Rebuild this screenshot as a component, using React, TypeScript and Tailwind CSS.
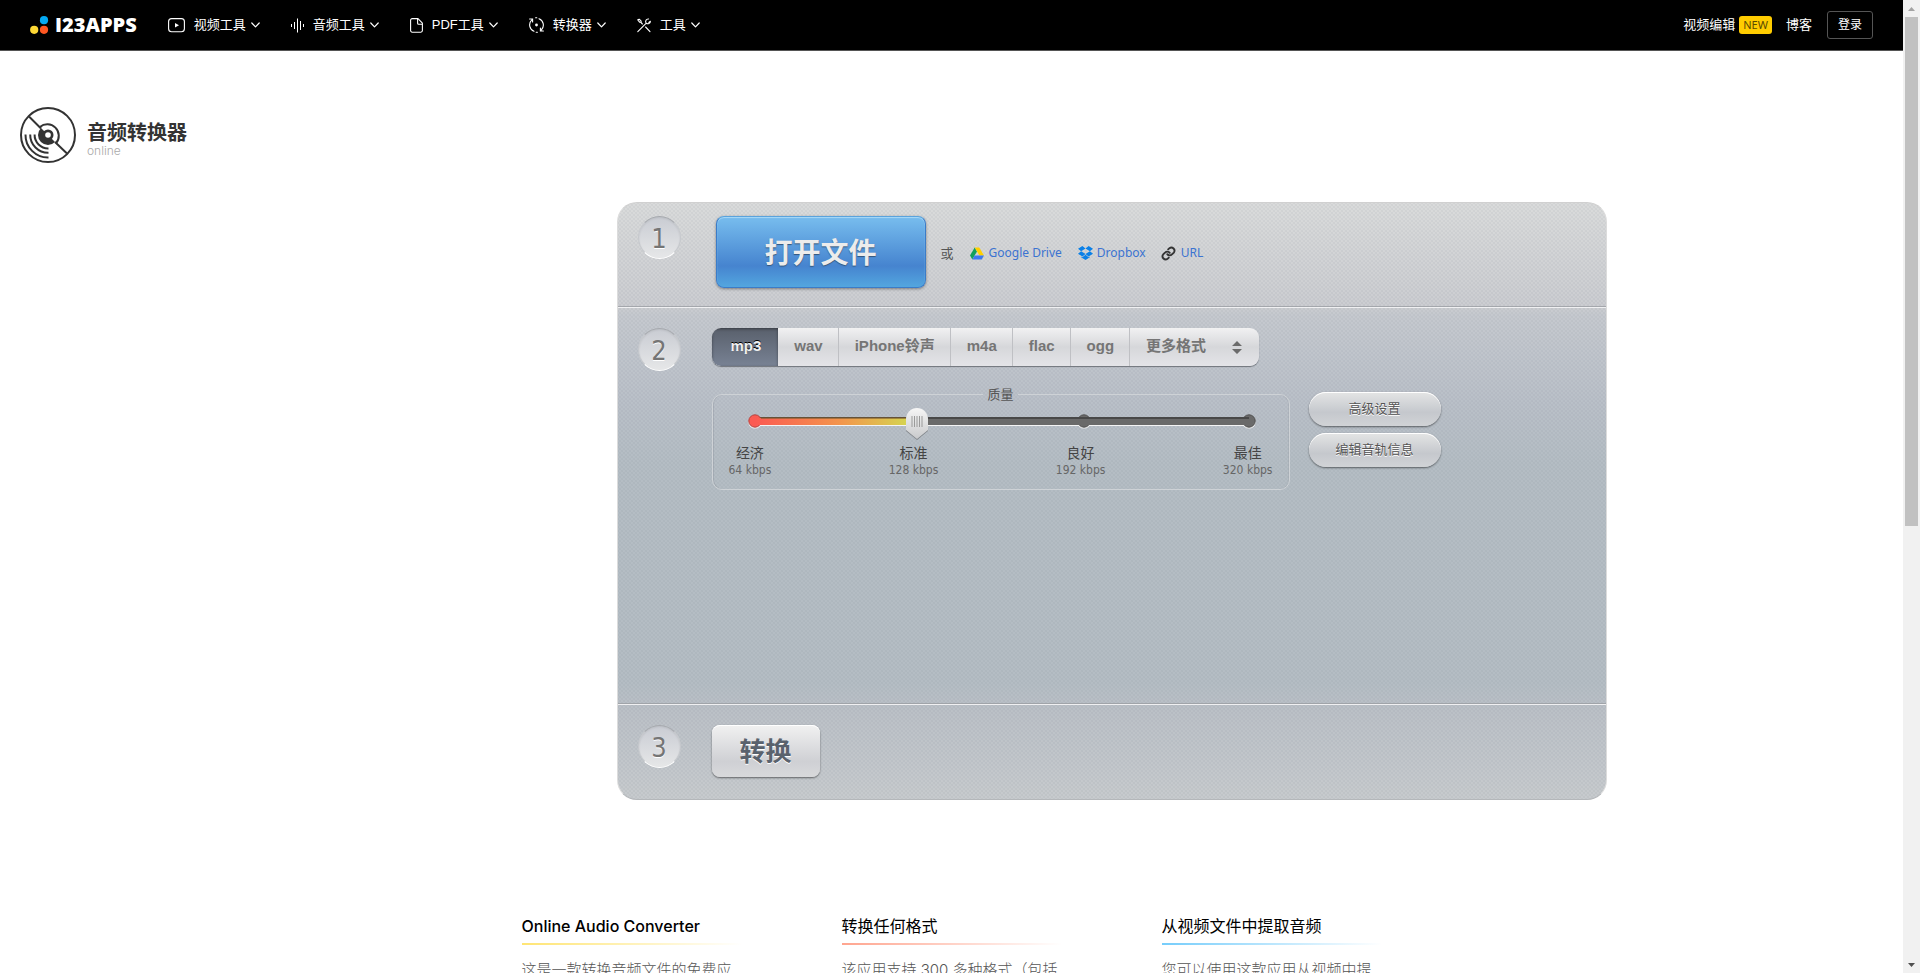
import { useState } from "react";
import type { ReactNode } from "react";

function Chevron() {
  return (
    <svg width="9" height="6" viewBox="0 0 9 6" fill="none" stroke="currentColor" strokeWidth="1.2" strokeLinecap="round" strokeLinejoin="round">
      <path d="M0.8 1 L4.5 4.8 L8.2 1" />
    </svg>
  );
}

const icons = {
  video: (
    <svg width="17" height="15" viewBox="0 0 17 15" fill="none" stroke="currentColor" strokeWidth="1.1">
      <rect x="0.6" y="0.6" width="15.8" height="13.2" rx="3" />
      <path d="M7 5 L11 7.2 L7 9.5 Z" fill="currentColor" stroke="none" />
    </svg>
  ),
  audio: (
    <svg width="13" height="15" viewBox="0 0 13 15" fill="none" stroke="currentColor" strokeWidth="1">
      <path d="M0.5 6v3M3.5 4v7M6.5 0.5v14M9.5 3v9M12.5 6v3" />
    </svg>
  ),
  pdf: (
    <svg width="13" height="15" viewBox="0 0 13 15" fill="none" stroke="currentColor" strokeWidth="1.1" strokeLinejoin="round">
      <path d="M8 0.6H2.2a1.6 1.6 0 0 0-1.6 1.6v10.4a1.6 1.6 0 0 0 1.6 1.6h8.6a1.6 1.6 0 0 0 1.6-1.6V5.2L8 0.6Z" />
      <path d="M7.6 0.8v4.4a1 1 0 0 0 1 1h3.6" />
    </svg>
  ),
  convert: (
    <svg width="15" height="16" viewBox="0 0 15 16" fill="none" stroke="currentColor" strokeWidth="1.1" strokeLinecap="round">
      <path d="M5 14.300A6.800 6.800 0 0 1 2.600 3.200M0.600 2h3v3" />
      <path d="M10 1.700A6.800 6.800 0 0 1 12.400 12.800M14.400 14h-3v-3" />
      <path d="M6.600 0.800h1.200M7.200 15.200h1.200" />
      <circle cx="7.5" cy="8" r="1.400" fill="currentColor" stroke="none" />
    </svg>
  ),
  tools: (
    <svg width="14" height="15" viewBox="0 0 14 15" fill="none" stroke="currentColor" strokeWidth="1.1" strokeLinecap="round" strokeLinejoin="round">
      <path d="M0.800 13.600L9 5.400M11.600 1a2.600 2.600 0 0 0-2.400 4.200 2.600 2.600 0 0 0 4.200-2L11.800 4.400" />
      <path d="M13 13.600L8.600 9M5.400 6L3.600 4.200M0.800 1.800l1.400-.6 1.800 1.600.2 1.400-1.600 0Z" />
    </svg>
  ),
};

const nav: { icon: ReactNode; label: string }[] = [
  { icon: icons.video, label: "视频工具" },
  { icon: icons.audio, label: "音频工具" },
  { icon: icons.pdf, label: "PDF工具" },
  { icon: icons.convert, label: "转换器" },
  { icon: icons.tools, label: "工具" },
];

function Header() {
  return (
    <header className="flex h-[51px] items-center justify-between border-b border-[#555] bg-black px-[30px] text-[13px] text-white">
      <div className="flex items-center gap-[31px]">
        <a href="#" className="flex items-center gap-[6px]">
          <svg width="19" height="18" viewBox="0 0 19 18">
            <circle cx="14" cy="4.2" r="4.1" fill="#03a9f4" />
            <circle cx="4.2" cy="13.8" r="4.1" fill="#fdd835" />
            <circle cx="14" cy="13.8" r="4.1" fill="#ff5722" />
          </svg>
          <span className="font-['Open_Sans','Noto_Sans_CJK_SC',sans-serif] text-[20px] leading-[20px] font-extrabold">I23APPS</span>
        </a>
        <nav className="flex items-center gap-[31px]">
          {nav.map((n) => (
            <button key={n.label} type="button" className="flex items-center">
              {n.icon}
              <span className="mr-[5px] ml-[9px]">{n.label}</span>
              <Chevron />
            </button>
          ))}
        </nav>
      </div>
      <div className="flex items-center">
        <a href="#" className="flex items-center gap-1">
          视频编辑
          <span className="rounded-[3px] bg-[#ffcc00] px-1 font-['Noto_Sans',sans-serif] text-[11px] leading-[18px] text-[#5a4a00]">NEW</span>
        </a>
        <a href="#" className="ml-[14px]">博客</a>
        <button type="button" className="ml-[15px] h-7 rounded-[3px] border border-[#555] px-[10px] text-[12px]">
          登录
        </button>
      </div>
    </header>
  );
}

function DiscIcon() {
  return (
    <svg width="56" height="56" viewBox="0 0 56 56" fill="none" stroke="#333" strokeWidth="2">
      <circle cx="28" cy="28" r="27" />
      <path d="M9 9.500L21 21.500M35 35L47 46.500" />
      <path d="M19.900 19.900A11.500 11.500 0 0 1 36.100 36.100" />
      <path d="M21 21A9.900 9.900 0 1 0 35 35Z" fill="#333" stroke="none" />
      <circle cx="28" cy="28" r="5.500" fill="#333" stroke="none" />
      <circle cx="28" cy="28" r="2.800" fill="#fff" stroke="none" />
      <path d="M5.500 27.500A22.500 22.500 0 0 0 28.500 50.500M10.200 27.500A18 18 0 0 0 28.500 45.800M14.600 27.500A13.600 13.600 0 0 0 28.500 41.400" />
    </svg>
  );
}

function StepNumber({ n }: { n: number }) {
  return (
    <div className="flex size-[43px] shrink-0 items-center justify-center rounded-full border border-x-[#c6c9cd] border-t-[#a6a9ae] border-b-white bg-linear-to-b from-[#c9ccd3] to-[#e6e7e8] pt-px font-['DejaVu_Sans_Condensed','DejaVu_Sans',sans-serif] text-[27px] leading-none text-[#757575] shadow-[inset_0_1px_2px_rgba(0,0,0,.08)] [text-shadow:0_1px_0_#fff]">
      {n}
    </div>
  );
}

const formats = ["mp3", "wav", "iPhone铃声", "m4a", "flac", "ogg"];

function FormatBar() {
  const [active, setActive] = useState("mp3");
  return (
    <div className="flex h-[38px] w-fit overflow-hidden rounded-[9px] bg-linear-to-b from-[#f1f1f2] via-[#d6d7da] to-[#e4e4e8] text-[15px] font-bold text-[#757575] shadow-[0_1px_1px_#6f747b] [text-shadow:0_1px_0_#fff]">
      {formats.map((f) => (
        <button
          key={f}
          type="button"
          onClick={() => setActive(f)}
          className={
            f === active
              ? "bg-linear-to-b from-[#59606c] to-[#788294] pr-[17px] pb-[2px] pl-[19px] text-[#f0f0f0] shadow-[inset_0_1px_3px_rgba(0,0,0,.4)] [text-shadow:0_-1px_0_#000]"
              : "border-r border-[#bfc0c4] pr-[15px] pb-[2px] pl-4"
          }
        >
          {f}
        </button>
      ))}
      <button type="button" className="flex items-center gap-[25px] pr-4 pl-4">
        <span className="pb-[2px]">更多格式</span>
        <svg width="12" height="15" viewBox="0 0 12 15" fill="#6b6b6b">
          <path d="M1 6L6 1l5 5ZM1 9h10L6 14Z" />
        </svg>
      </button>
    </div>
  );
}

const marks = [
  { name: "经济", rate: "64 kbps" },
  { name: "标准", rate: "128 kbps" },
  { name: "良好", rate: "192 kbps" },
  { name: "最佳", rate: "320 kbps" },
];

function Quality() {
  return (
    <fieldset className="h-[102px] w-[578px] rounded-[10px] border border-[#ced2d6] px-4 shadow-[inset_1px_0_0_rgba(120,125,135,.25),inset_-1px_0_0_rgba(120,125,135,.15)]">
      <legend className="mx-auto px-1 text-[13px] leading-[13px] text-[#555]">质量</legend>
      <div className="grid pt-[6px] pr-4 pl-[18px]">
        <svg width="510" height="36" viewBox="0 0 510 36" className="[grid-area:1/1]">
          <defs>
            <linearGradient id="track-fill" gradientUnits="userSpaceOnUse" x1="8" x2="163" y1="0" y2="0">
              <stop offset="0" stopColor="#fb5a52" />
              <stop offset=".55" stopColor="#f3954c" />
              <stop offset="1" stopColor="#d4d650" />
            </linearGradient>
            <linearGradient id="thumb-face" x1="0" x2="0" y1="0" y2="1">
              <stop offset="0" stopColor="#f6f6f6" />
              <stop offset="1" stopColor="#c9cacc" />
            </linearGradient>
          </defs>
          <g fill="#f4f4f4">
            <rect x="8" y="11" width="494" height="8" />
            <circle cx="8" cy="15" r="6.600" />
            <circle cx="337" cy="15" r="6.600" />
            <circle cx="502" cy="15" r="6.600" />
          </g>
          <g fill="#6a6a6a">
            <circle cx="337" cy="14" r="6.200" stroke="#505050" />
            <circle cx="502" cy="14" r="6.200" stroke="#505050" />
            <rect x="8" y="10" width="494" height="8" />
          </g>
          <rect x="8" y="10" width="494" height="2" fill="#484848" />
          <circle cx="8" cy="14" r="6.200" fill="#fb5a52" stroke="#b34440" />
          <rect x="8" y="11" width="155" height="7" fill="url(#track-fill)" />
          <rect x="14" y="10" width="149" height="2" fill="#7a5a30" opacity=".6" />
          <path d="M159 13a11 11 0 0 1 22 0v11l-11 9-11-9Z" fill="#333" opacity=".4" />
          <path d="M159 12a11 11 0 0 1 22 0v11l-11 9-11-9Z" fill="url(#thumb-face)" />
          <path d="M165 9v11M167.500 9v11M170 9v11M172.500 9v11M175 9v11" stroke="#9a9a9a" />
        </svg>
        <input type="range" min="0" max="3" defaultValue="1" aria-label="质量" className="h-9 w-full opacity-0 [grid-area:1/1]" />
      </div>
      <div className="flex justify-between pt-[2px]">
        {marks.map((m) => (
          <div key={m.rate} className="text-center">
            <div className="text-[14px] leading-[17px] text-[#444]">{m.name}</div>
            <div className="font-['DejaVu_Sans_Condensed','DejaVu_Sans',sans-serif] text-[12px] leading-[16px] text-[#666]">{m.rate}</div>
          </div>
        ))}
      </div>
    </fieldset>
  );
}

function Pill({ children }: { children: ReactNode }) {
  return (
    <button
      type="button"
      className="h-[34px] w-[132px] rounded-full bg-linear-to-b from-[#e4e5e5] via-[#c5c8cd] via-60% to-[#d1d3d6] text-[13px] text-[#555] shadow-[inset_0_1px_0_#fff,0_1px_2px_rgba(0,0,0,.5)] [text-shadow:0_1px_0_#fff]"
    >
      {children}
    </button>
  );
}

function Sources() {
  return (
    <div className="flex items-center font-['Noto_Sans','Noto_Sans_CJK_SC',sans-serif] text-[12px] text-[#3b73d1]">
      <span className="mr-4 font-['Noto_Sans_CJK_SC',sans-serif] text-[13px] text-[#555]">或</span>
      <a href="#" className="mr-4 flex items-center gap-[5px]">
        <svg width="14" height="13" viewBox="0 0 14 13">
          <path d="M4.700 0.500L0 8.600l2.300 3.900L7 4.400Z" fill="#12a05c" />
          <path d="M4.700 0.500h4.600L14 8.600H9.400Z" fill="#ffcf00" />
          <path d="M4.700 8.600H14l-2.300 3.900H2.300Z" fill="#3c78f0" />
        </svg>
        Google Drive
      </a>
      <a href="#" className="mr-[15px] flex items-center gap-1">
        <svg width="15" height="14" viewBox="0 0 15 14" fill="#0a80e8">
          <path d="M4.400 0L0 2.800l3.100 2.500L7.500 2.600ZM0 7.700l4.400 2.900 3.100-2.600-4.400-2.700ZM7.500 8l3.100 2.600L15 7.700l-3.100-2.400ZM15 2.800L10.600 0 7.500 2.600l4.400 2.700ZM7.500 8.700l-3.100 2.500-1.300-.8v.9L7.500 14l4.400-2.700v-.9l-1.300.8Z" />
        </svg>
        Dropbox
      </a>
      <a href="#" className="flex items-center gap-[5px]">
        <svg width="15" height="15" viewBox="0 0 24 24" fill="none" stroke="#333" strokeWidth="3" strokeLinecap="round">
          <path d="M10 13a5 5 0 0 0 7.500.500l3-3a5 5 0 0 0-7-7l-2 2" />
          <path d="M14 11a5 5 0 0 0-7.500-.500l-3 3a5 5 0 0 0 7 7l2-2" />
        </svg>
        URL
      </a>
    </div>
  );
}

function Converter() {
  return (
    <main className="w-[990px] overflow-hidden rounded-[20px] border border-x-[#dcdcdc] border-t-[#d0d0d0] border-b-[#b4b7ba] bg-[radial-gradient(2px_1px,rgba(80,90,105,.07)_60%,transparent),radial-gradient(2px_1px,rgba(80,90,105,.07)_60%,transparent),linear-gradient(#dbdcdc_0px,#cdced2_104px,#c7cad0_112px,#bbc1c9_200px,#b6bec5_260px,#b6bec5_480px,#bdc2c8_510px,#c9cccf_598px)] bg-[size:4px_4px,4px_4px,100%_100%] bg-[position:0_0,2px_2px,0_0]">
      <section className="flex h-[104px] items-start border-b border-[#a4a7ac] px-5 pt-[13px]">
        <StepNumber n={1} />
        <button
          type="button"
          className="mr-[15px] ml-[35px] h-[72px] w-[210px] rounded-[8px] border border-[#3b7cc8] border-t-[#5aa3dd] bg-linear-to-b from-[#74b9ec] from-5% via-[#4684cf] via-70% to-[#53a6df] pt-1 text-[28px] font-bold text-[#ececec] shadow-[inset_0_1px_1px_#a9daf8,0_1px_3px_rgba(0,0,0,.4)] [text-shadow:0_1px_1px_#33557a]"
        >
          打开文件
        </button>
        <div className="flex h-[72px] items-center pt-[2px]">
          <Sources />
        </div>
      </section>
      <section className="flex h-[397px] items-start border-t border-b border-t-[#f0f0f2] border-b-[#a0a4a9] px-5 pt-5">
        <StepNumber n={2} />
        <div className="ml-[31px] flex flex-col gap-[22px]">
          <FormatBar />
          <div className="flex items-start gap-[19px]">
            <Quality />
            <div className="flex flex-col gap-[7px] pt-1">
              <Pill>高级设置</Pill>
              <Pill>编辑音轨信息</Pill>
            </div>
          </div>
        </div>
      </section>
      <section className="flex h-[95px] items-start border-t border-t-[#f0f0f2] px-5 pt-5">
        <StepNumber n={3} />
        <button
          type="button"
          className="ml-[31px] h-[52px] w-[108px] rounded-[8px] bg-linear-to-b from-[#f1f1f1] via-[#cfd0d4] via-70% to-[#d8d9db] pt-[2px] text-[26px] font-bold text-[#5a626d] shadow-[inset_0_1px_0_#fff,0_1px_2px_rgba(0,0,0,.5)] [text-shadow:0_1px_0_#fff]"
        >
          转换
        </button>
      </section>
    </main>
  );
}

const features = [
  { title: "Online Audio Converter", weight: "font-medium", line: "from-[#ffe574]", text: "这是一款转换音频文件的免费应" },
  { title: "转换任何格式", weight: "font-normal", line: "from-[#ffa58f]", text: "该应用支持 300 多种格式（包括" },
  { title: "从视频文件中提取音频", weight: "font-normal", line: "from-[#76cdfb]", text: "您可以使用这款应用从视频中提" },
];

function Scrollbar() {
  return (
    <div aria-hidden="true" className="fixed inset-y-0 right-0 flex w-[17px] flex-col items-center bg-[#f1f1f1]">
      <div className="flex h-[17px] items-center">
        <svg width="7" height="4" viewBox="0 0 7 4" fill="#a3a3a3">
          <path d="M0 4L3.500 0 7 4Z" />
        </svg>
      </div>
      <div className="w-[13px] grow-51 bg-[#c1c1c1]" />
      <div className="grow-43" />
      <div className="flex h-[17px] items-center">
        <svg width="7" height="4" viewBox="0 0 7 4" fill="#505050">
          <path d="M0 0L3.500 4 7 0Z" />
        </svg>
      </div>
    </div>
  );
}

export default function App() {
  return (
    <div className="h-screen overflow-hidden bg-white pr-[17px] font-['Liberation_Sans','Noto_Sans_CJK_SC',sans-serif]">
      <Header />
      <div className="flex">
        <aside className="w-80 shrink-0 pt-14 pl-5">
          <a href="#" className="flex items-center gap-[11px]">
            <DiscIcon />
            <span className="flex flex-col pt-2">
              <span className="text-[20px] leading-6 font-bold text-[#333]">音频转换器</span>
              <span className="font-['Inter',sans-serif] text-[12px] leading-3 font-light text-[#aaa]">online</span>
            </span>
          </a>
        </aside>
        <div className="flex flex-1 justify-center pt-[151px]">
          <Converter />
        </div>
      </div>
      <div className="mx-auto mt-[113px] flex w-fit gap-[100px]">
        {features.map((f) => (
          <article key={f.title} className="w-[220px]">
            <h2 className={`font-['Inter','Noto_Sans_CJK_SC',sans-serif] text-[16px] leading-[26px] text-black ${f.weight}`}>{f.title}</h2>
            <div className={`mt-1 h-[2px] bg-linear-to-r to-transparent ${f.line}`} />
            <p className="mt-3 font-['Inter','Noto_Sans_CJK_SC',sans-serif] text-[15px] leading-[25px] font-light text-[#555]">{f.text}</p>
          </article>
        ))}
      </div>
      <Scrollbar />
    </div>
  );
}
